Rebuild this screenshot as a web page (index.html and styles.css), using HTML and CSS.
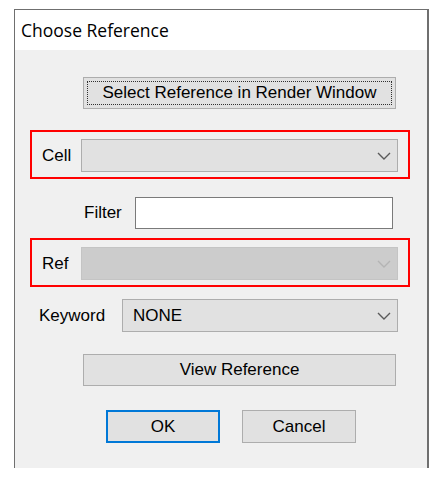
FILE: index.html
```html
<!DOCTYPE html>
<html>
<head>
<meta charset="utf-8">
<link rel="stylesheet" href="styles.css">
</head>
<body>
<div class="window">
  <div class="titlebar">Choose Reference</div>
  <div class="content">
    <div class="btn wide select-btn"><span class="focus">Select Reference in Render Window</span></div>
    <div class="redbox">
      <span class="lbl box-lbl">Cell</span>
      <div class="combo box-combo">
        <span class="combo-text"></span>
        <svg class="chev" width="14" height="8" viewBox="0 0 14 8"><polyline points="1,1 7,7 13,1" fill="none" stroke="#5a5a5a" stroke-width="1.4"/></svg>
      </div>
    </div>
    <div class="row filter-row">
      <span class="lbl filter-lbl">Filter</span>
      <div class="input"></div>
    </div>
    <div class="redbox ref-box">
      <span class="lbl box-lbl">Ref</span>
      <div class="combo box-combo disabled">
        <span class="combo-text"></span>
        <svg class="chev" width="14" height="8" viewBox="0 0 14 8"><polyline points="1,1 7,7 13,1" fill="none" stroke="#b4b4b4" stroke-width="1.4"/></svg>
      </div>
    </div>
    <div class="row keyword-row">
      <span class="lbl keyword-lbl">Keyword</span>
      <div class="combo keyword-combo">
        <span class="combo-text">NONE</span>
        <svg class="chev" width="14" height="8" viewBox="0 0 14 8"><polyline points="1,1 7,7 13,1" fill="none" stroke="#5a5a5a" stroke-width="1.4"/></svg>
      </div>
    </div>
    <div class="btn wide view-btn">View Reference</div>
    <div class="row action-row">
      <div class="btn action default">OK</div>
      <div class="btn action">Cancel</div>
    </div>
  </div>
</div>
</body>
</html>
```
FILE: styles.css
```css
html, body {
  margin: 0;
  padding: 0;
  background: #ffffff;
}
body {
  width: 441px;
  height: 482px;
  overflow: hidden;
}
.window {
  margin-left: 14px;
  margin-top: 9px;
  width: 412px;
  border-top: 1px solid #6f6f6f;
  border-left: 1px solid #6f6f6f;
  border-right: 2px solid #6f6f6f;
  background: #f0f0f0;
}
.titlebar {
  height: 40px;
  background: #ffffff;
  display: flex;
  align-items: center;
  padding-left: 6px;
  font-family: "Open Sans", "Noto Sans", sans-serif;
  font-size: 17.5px;
  color: #000;
}
.content {
  height: 418px;
  display: flex;
  flex-direction: column;
  font-family: "Liberation Sans", Arial, sans-serif;
  font-size: 17px;
  color: #000;
}
.btn {
  box-sizing: border-box;
  background: #e1e1e1;
  border: 1px solid #adadad;
  display: flex;
  align-items: center;
  justify-content: center;
}
.wide {
  margin-left: 68px;
  width: 313px;
  height: 32px;
}
.select-btn {
  margin-top: 27px;
  padding: 3px;
}
.focus {
  flex: 1;
  align-self: stretch;
  display: flex;
  align-items: center;
  justify-content: center;
  border: 1px dotted #303030;
}
.redbox {
  box-sizing: border-box;
  margin-left: 15px;
  width: 380px;
  height: 49px;
  border: 2px solid #ff0000;
  display: flex;
  align-items: center;
  padding-left: 10px;
  padding-top: 2px;
  margin-top: 21px;
}
.ref-box {
  margin-top: 9px;
}
.lbl {
  display: block;
}
.box-lbl {
  width: 39px;
}
.combo {
  box-sizing: border-box;
  height: 33px;
  background: #e1e1e1;
  border: 1px solid #adadad;
  display: flex;
  align-items: center;
  padding-left: 10px;
  padding-right: 6px;
}
.combo.disabled {
  background: #cccccc;
  border-color: #c4c4c4;
}
.combo-text {
  flex: 1;
}
.chev {
  display: block;
}
.box-combo {
  width: 317px;
}
.row {
  display: flex;
  align-items: center;
}
.filter-row {
  margin-top: 18px;
  margin-left: 69px;
}
.filter-lbl {
  width: 51px;
}
.input {
  box-sizing: border-box;
  width: 258px;
  height: 32px;
  background: #ffffff;
  border: 1px solid #7a7a7a;
}
.keyword-row {
  margin-top: 12px;
  margin-left: 24px;
}
.keyword-lbl {
  width: 83px;
}
.keyword-combo {
  width: 276px;
}
.view-btn {
  margin-top: 22px;
}
.action-row {
  margin-top: 24px;
  margin-left: 91px;
  gap: 22px;
}
.action {
  width: 114px;
  height: 33px;
}
.default {
  border: 2px solid #0078d7;
}
```
